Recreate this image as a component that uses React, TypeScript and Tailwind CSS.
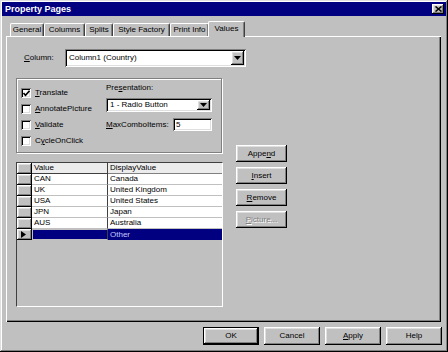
import React from 'react';

const raised =
  'shadow-[inset_-1px_-1px_#000,inset_1px_1px_#fff,inset_-2px_-2px_#808080,inset_2px_2px_#dfdfdf]';
const sunken =
  'shadow-[inset_1px_1px_#808080,inset_-1px_-1px_#fff,inset_2px_2px_#000,inset_-2px_-2px_#dfdfdf]';

function Key({ children }: { children: React.ReactNode }) {
  return <span className="underline underline-offset-[1px]">{children}</span>;
}

function Arrow() {
  return (
    <div className={`w-[13px] h-full bg-[#c0c0c0] flex items-center justify-center ${raised}`}>
      <svg width="7" height="4" viewBox="0 0 7 4">
        <path d="M0 0h7L3.5 4z" fill="#000" />
      </svg>
    </div>
  );
}

function Combo({ value, className }: { value: string; className: string }) {
  return (
    <div className={`bg-white p-[2px] flex ${sunken} ${className}`}>
      <div className="flex-1 flex items-center pl-[2px]">{value}</div>
      <Arrow />
    </div>
  );
}

function Check({ checked, children }: { checked?: boolean; children: React.ReactNode }) {
  return (
    <div className="flex items-center h-[10px] gap-[4px]">
      <div className={`w-[10px] h-[10px] bg-white flex items-center justify-center ${sunken}`}>
        {checked && (
          <svg width="7" height="7" viewBox="0 0 7 7">
            <path d="M0.5 3l2 2.2L6.5 0.8" stroke="#000" strokeWidth="1.6" fill="none" />
          </svg>
        )}
      </div>
      <span>{children}</span>
    </div>
  );
}

function Btn({
  children,
  className = '',
  disabled,
  def,
}: {
  children: React.ReactNode;
  className?: string;
  disabled?: boolean;
  def?: boolean;
}) {
  return (
    <div className={`bg-[#c0c0c0] ${def ? 'border border-black' : ''} ${className}`}>
      <div
        className={`w-full h-full flex items-center justify-center ${raised} ${
          disabled ? 'text-[#808080] [text-shadow:1px_1px_#fff]' : ''
        }`}
      >
        {children}
      </div>
    </div>
  );
}

const tabs = [
  { name: 'General', w: 'w-[34px]' },
  { name: 'Columns', w: 'w-[41px]' },
  { name: 'Splits', w: 'w-[28px]' },
  { name: 'Style Factory', w: 'w-[57px]' },
  { name: 'Print Info', w: 'w-[39px]' },
];

const rows = [
  ['CAN', 'Canada'],
  ['UK', 'United Kingdom'],
  ['USA', 'United States'],
  ['JPN', 'Japan'],
  ['AUS', 'Australia'],
];

export default function App() {
  return (
    <div
      className={`w-[448px] h-[352px] bg-[#c0c0c0] p-[2px] flex flex-col font-['Liberation_Sans',Arial,sans-serif] text-[8px] leading-none text-black shadow-[inset_-1px_-1px_#000,inset_1px_1px_#dfdfdf,inset_-2px_-2px_#808080,inset_2px_2px_#fff]`}
    >
      {/* title bar */}
      <div className="h-[14px] bg-[#000080] flex items-center justify-between pl-[3px] pr-[2px]">
        <span className="text-white font-bold text-[9px]">Property Pages</span>
        <div className={`w-[12px] h-[10px] bg-[#c0c0c0] flex items-center justify-center ${raised}`}>
          <svg width="7" height="6" viewBox="0 0 7 6">
            <path d="M0.5 0.5l6 5M6.5 0.5l-6 5" stroke="#000" strokeWidth="1.5" />
          </svg>
        </div>
      </div>

      {/* tabs */}
      <div className="mt-[5px] ml-[4px] pl-[4px] h-[15px] flex items-end">
        {tabs.map((t) => (
          <div
            key={t.name}
            className={`${t.w} h-[13px] flex items-center justify-center rounded-t-[2px] border-t border-l border-white border-r border-r-[#404040] shadow-[inset_-1px_0_#808080]`}
          >
            {t.name}
          </div>
        ))}
        <div className="relative z-10 w-[37px] h-[16px] -mb-[1px] -ml-[1px] bg-[#c0c0c0] flex items-center justify-center rounded-t-[2px] border-t border-l border-white border-r border-r-[#404040] shadow-[inset_-1px_0_#808080] pb-[1px]">
          Values
        </div>
      </div>

      {/* panel */}
      <div className="ml-[4px] w-[435px] h-[286px] pl-[10px] pt-[13px] shadow-[inset_1px_1px_#fff,inset_-1px_-1px_#000,inset_-2px_-2px_#808080]">
        <div className="flex items-center pl-[8px] h-[18px]">
          <span className="w-[41px]">
            <Key>C</Key>olumn:
          </span>
          <Combo value="Column1 (Country)" className="w-[181px] h-[18px]" />
        </div>

        <div className="flex mt-[11px]">
          <div className="w-[207px]">
            {/* group */}
            <div className="w-[206px] h-[75px] border border-[#808080] shadow-[inset_1px_1px_#fff,1px_1px_#fff] flex">
              <div className="w-[89px] pl-[4px] pt-[9px] flex flex-col gap-[6px]">
                <Check checked>
                  <Key>T</Key>ranslate
                </Check>
                <Check>
                  <Key>A</Key>nnotatePicture
                </Check>
                <Check>
                  <Key>V</Key>alidate
                </Check>
                <Check>
                  C<Key>y</Key>cleOnClick
                </Check>
              </div>
              <div className="w-[106px] pt-[5px]">
                <div className="h-[9px]">
                  Pre<Key>s</Key>entation:
                </div>
                <Combo value="1 - Radio Button" className="mt-[5px] w-[106px] h-[14px]" />
                <div className="mt-[6px] flex items-center h-[13px]">
                  <span className="w-[67px]">
                    <Key>M</Key>axComboItems:
                  </span>
                  <div className={`w-[39px] h-[13px] bg-white pl-[3px] flex items-center ${sunken}`}>5</div>
                </div>
              </div>
            </div>

            {/* grid */}
            <div className="mt-[9px] w-[207px] h-[145px] bg-[#c0c0c0] border border-t-[#404040] border-l-[#404040] border-b-white border-r-white">
              <div className="flex h-[11px]">
                <div className={`w-[15px] h-full bg-[#c0c0c0] ${raised}`} />
                <div className="w-[76px] h-full bg-[#ececec] pl-[2px] flex items-center border-r border-b border-[#404040]">
                  Value
                </div>
                <div className="w-[114px] h-full bg-[#ececec] pl-[2px] flex items-center border-b border-[#808080]">
                  DisplayValue
                </div>
              </div>
              {rows.map(([v, d]) => (
                <div key={v} className="flex h-[11px]">
                  <div className={`w-[15px] h-full bg-[#c0c0c0] ${raised}`} />
                  <div className="w-[76px] h-full bg-white pl-[2px] flex items-center border-r border-b border-r-[#404040] border-b-[#c0c0c0]">
                    {v}
                  </div>
                  <div className="w-[114px] h-full bg-white pl-[2px] flex items-center border-b border-[#c0c0c0]">
                    {d}
                  </div>
                </div>
              ))}
              <div className="flex h-[11px]">
                <div className={`w-[15px] h-full bg-[#c0c0c0] flex items-center pl-[4px] ${raised}`}>
                  <svg width="5" height="7" viewBox="0 0 5 7">
                    <path d="M0 0l5 3.5L0 7z" fill="#000" />
                  </svg>
                </div>
                <div className="w-[76px] h-full bg-[#000080] border border-[#c0c0c0] border-r-[#404040]" />
                <div className="w-[114px] h-full bg-[#000080] text-[#c8c8ff] pl-[2px] flex items-center">
                  Other
                </div>
              </div>
            </div>
          </div>

          <div className="ml-[13px] mt-[67px] flex flex-col gap-[5px]">
            <Btn className="w-[51px] h-[17px]">
              Appe<Key>n</Key>d
            </Btn>
            <Btn className="w-[51px] h-[17px]">
              <Key>I</Key>nsert
            </Btn>
            <Btn className="w-[51px] h-[17px]">
              <Key>R</Key>emove
            </Btn>
            <Btn className="w-[51px] h-[17px]" disabled>
              <Key>P</Key>icture...
            </Btn>
          </div>
        </div>
      </div>

      {/* footer */}
      <div className="mt-[5px] pr-[4px] flex justify-end gap-[5px]">
        <Btn def className="w-[56px] h-[18px]">
          OK
        </Btn>
        <Btn className="w-[56px] h-[18px]">Cancel</Btn>
        <Btn className="w-[56px] h-[18px]">
          <Key>A</Key>pply
        </Btn>
        <Btn className="w-[56px] h-[18px]">Help</Btn>
      </div>
    </div>
  );
}
